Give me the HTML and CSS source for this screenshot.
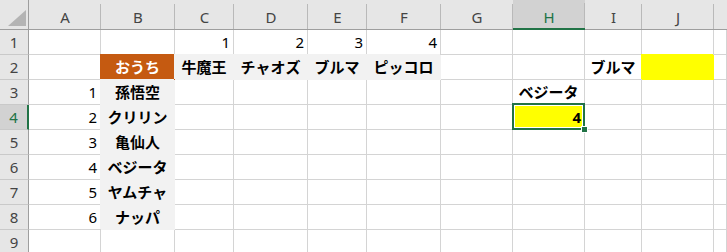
FILE: index.html
```html
<!DOCTYPE html>
<html lang="ja">
<head>
    <meta charset="UTF-8">
    <meta name="viewport" content="width=device-width, initial-scale=1.0">
    <title>Sheet1</title>
    <link rel="stylesheet" href="styles.css">
</head>
<body>
    <div class="sheet">
        <!-- column headers -->
        <div class="corner">
            <svg width="18" height="16" viewBox="0 0 18 16"><polygon points="18,0 18,16 0,16" fill="#b4b4b4"/></svg>
        </div>
        <div class="hd">A</div>
        <div class="hd">B</div>
        <div class="hd">C</div>
        <div class="hd">D</div>
        <div class="hd">E</div>
        <div class="hd">F</div>
        <div class="hd">G</div>
        <div class="hd sel">H</div>
        <div class="hd">I</div>
        <div class="hd">J</div>
        <div class="hd last"></div>

        <!-- row 1 -->
        <div class="rh">1</div>
        <div class="c"></div>
        <div class="c"></div>
        <div class="c num">1</div>
        <div class="c num">2</div>
        <div class="c num">3</div>
        <div class="c num">4</div>
        <div class="c"></div>
        <div class="c"></div>
        <div class="c"></div>
        <div class="c"></div>
        <div class="c"></div>

        <!-- row 2 -->
        <div class="rh">2</div>
        <div class="c"></div>
        <div class="c jp orange">おうち</div>
        <div class="c jp fill">牛魔王</div>
        <div class="c jp fill">チャオズ</div>
        <div class="c jp fill">ブルマ</div>
        <div class="c jp fill">ピッコロ</div>
        <div class="c"></div>
        <div class="c"></div>
        <div class="c jp">ブルマ</div>
        <div class="c yellow"></div>
        <div class="c"></div>

        <!-- row 3 -->
        <div class="rh">3</div>
        <div class="c num">1</div>
        <div class="c jp fill">孫悟空</div>
        <div class="c"></div>
        <div class="c"></div>
        <div class="c"></div>
        <div class="c"></div>
        <div class="c"></div>
        <div class="c jp">ベジータ</div>
        <div class="c"></div>
        <div class="c"></div>
        <div class="c"></div>

        <!-- row 4 -->
        <div class="rh sel">4</div>
        <div class="c num">2</div>
        <div class="c jp fill">クリリン</div>
        <div class="c"></div>
        <div class="c"></div>
        <div class="c"></div>
        <div class="c"></div>
        <div class="c"></div>
        <div class="c num bold yellow active">4<span class="handle"></span></div>
        <div class="c"></div>
        <div class="c"></div>
        <div class="c"></div>

        <!-- row 5 -->
        <div class="rh">5</div>
        <div class="c num">3</div>
        <div class="c jp fill">亀仙人</div>
        <div class="c"></div>
        <div class="c"></div>
        <div class="c"></div>
        <div class="c"></div>
        <div class="c"></div>
        <div class="c"></div>
        <div class="c"></div>
        <div class="c"></div>
        <div class="c"></div>

        <!-- row 6 -->
        <div class="rh">6</div>
        <div class="c num">4</div>
        <div class="c jp fill">ベジータ</div>
        <div class="c"></div>
        <div class="c"></div>
        <div class="c"></div>
        <div class="c"></div>
        <div class="c"></div>
        <div class="c"></div>
        <div class="c"></div>
        <div class="c"></div>
        <div class="c"></div>

        <!-- row 7 -->
        <div class="rh">7</div>
        <div class="c num">5</div>
        <div class="c jp fill">ヤムチャ</div>
        <div class="c"></div>
        <div class="c"></div>
        <div class="c"></div>
        <div class="c"></div>
        <div class="c"></div>
        <div class="c"></div>
        <div class="c"></div>
        <div class="c"></div>
        <div class="c"></div>

        <!-- row 8 -->
        <div class="rh">8</div>
        <div class="c num">6</div>
        <div class="c jp fill">ナッパ</div>
        <div class="c"></div>
        <div class="c"></div>
        <div class="c"></div>
        <div class="c"></div>
        <div class="c"></div>
        <div class="c"></div>
        <div class="c"></div>
        <div class="c"></div>
        <div class="c"></div>

        <!-- row 9 -->
        <div class="rh">9</div>
        <div class="c"></div>
        <div class="c"></div>
        <div class="c"></div>
        <div class="c"></div>
        <div class="c"></div>
        <div class="c"></div>
        <div class="c"></div>
        <div class="c"></div>
        <div class="c"></div>
        <div class="c"></div>
        <div class="c"></div>
    </div>
</body>
</html>
```

FILE: styles.css
```css
html, body {
    margin: 0;
    background: #ffffff;
    overflow: hidden;
}
body {
    font-family: "Noto Sans CJK JP", "Noto Sans", sans-serif;
    font-size: 15px;
    color: #000000;
}
.sheet {
    display: grid;
    grid-template-columns: 29px 72px 74px 59px 74px 59px 74px 72px 72px 57px 72px 1fr;
    grid-template-rows: 30px repeat(9, 25px);
    width: 727px;
}
.corner {
    background: #e6e6e6;
    border-bottom: 1px solid #9e9e9e;
    border-right: 1px solid #9e9e9e;
    display: flex;
    align-items: flex-end;
    justify-content: flex-end;
    padding: 0 2px 3px 0;
    box-sizing: border-box;
}
.corner svg {
    display: block;
}
.hd {
    background-color: #e6e6e6;
    background-image: linear-gradient(#b9b9b9, #b9b9b9);
    background-size: 1px 25px;
    background-position: right bottom;
    background-repeat: no-repeat;
    border-bottom: 1px solid #9e9e9e;
    box-sizing: border-box;
    padding-top: 5px;
    display: flex;
    align-items: center;
    justify-content: center;
    color: #444444;
    font-family: "Noto Sans", sans-serif;
    font-size: 15px;
}
.hd.last {
    background-image: none;
}
.hd.sel {
    background-color: #d2d2d2;
    border-bottom: 2px solid #217346;
    color: #217346;
}
.rh {
    background: #e6e6e6;
    border-right: 1px solid #9e9e9e;
    border-bottom: 1px solid #c9c9c9;
    box-sizing: border-box;
    display: flex;
    align-items: center;
    justify-content: center;
    color: #444444;
    font-family: "Noto Sans", sans-serif;
    font-size: 15px;
}
.rh.sel {
    background: #d2d2d2;
    border-right: 2px solid #217346;
    color: #217346;
}
.c {
    border-right: 1px solid #d4d4d4;
    border-bottom: 1px solid #d4d4d4;
    box-sizing: border-box;
    display: flex;
    align-items: center;
    white-space: nowrap;
    overflow: visible;
    position: relative;
}
.num {
    justify-content: flex-end;
    padding-right: 3px;
    font-family: "Noto Sans", sans-serif;
}
.bold {
    font-weight: bold;
}
.jp {
    justify-content: center;
    font-weight: bold;
    padding-bottom: 2px;
}
.orange {
    background: #c55a11;
    border-color: #c55a11;
    box-shadow: -1px -1px 0 #c55a11;
    color: #ffffff;
}
.fill {
    background: #f2f2f2;
    border-color: #f2f2f2;
    box-shadow: -1px -1px 0 #f2f2f2;
}
.yellow {
    background: #ffff00;
    border-color: #ffff00;
    box-shadow: -1px -1px 0 #ffff00;
}
.active {
    border-color: #217346;
    box-shadow: none;
}
.active::before {
    content: "";
    position: absolute;
    left: -1px;
    top: -2px;
    right: -1px;
    bottom: -1px;
    border: 2px solid #217346;
    box-shadow: inset 0 0 0 1px #ffffff;
}
.handle {
    position: absolute;
    right: -4px;
    bottom: -4px;
    width: 5px;
    height: 5px;
    background: #217346;
    border: 1px solid #ffffff;
    z-index: 2;
}
```
